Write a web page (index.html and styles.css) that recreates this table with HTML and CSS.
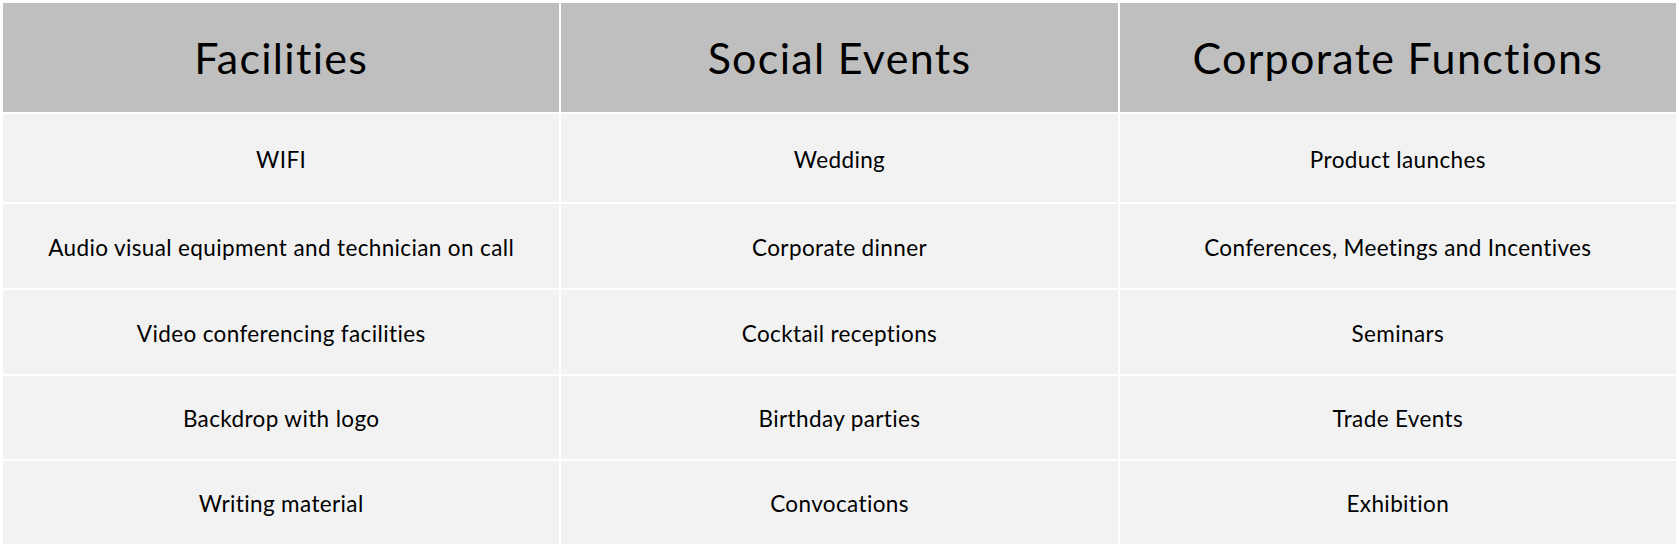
FILE: index.html
```html
<!DOCTYPE html>
<html lang="en">
<head>
<meta charset="utf-8">
<title>Facilities and Events</title>
<link rel="stylesheet" href="styles.css">
</head>
<body>
<table class="grid">
  <thead>
    <tr class="head-row">
      <th>Facilities</th>
      <th>Social Events</th>
      <th>Corporate Functions</th>
    </tr>
  </thead>
  <tbody>
    <tr class="row row-1">
      <td>WIFI</td>
      <td>Wedding</td>
      <td>Product launches</td>
    </tr>
    <tr class="row row-2">
      <td>Audio visual equipment and technician on call</td>
      <td>Corporate dinner</td>
      <td>Conferences, Meetings and Incentives</td>
    </tr>
    <tr class="row row-3">
      <td>Video conferencing facilities</td>
      <td>Cocktail receptions</td>
      <td>Seminars</td>
    </tr>
    <tr class="row row-4">
      <td>Backdrop with logo</td>
      <td>Birthday parties</td>
      <td>Trade Events</td>
    </tr>
    <tr class="row row-5">
      <td>Writing material</td>
      <td>Convocations</td>
      <td>Exhibition</td>
    </tr>
  </tbody>
</table>
</body>
</html>
```

FILE: styles.css
```css
html, body {
  margin: 0;
  padding: 0;
  background: #ffffff;
}

body {
  padding: 1px;
  font-family: Lato, "Open Sans", "Liberation Sans", sans-serif;
  color: #000000;
}

.grid {
  width: 100%;
  table-layout: fixed;
  border-collapse: separate;
  border-spacing: 2px;
}

.grid th,
.grid td {
  padding: 0;
  text-align: center;
  vertical-align: middle;
}

.grid th {
  background: #bfbfbf;
  height: 109px;
  font-size: 43px;
  font-weight: 400;
  letter-spacing: 1.3px;
}

.grid td {
  background: #f2f2f2;
  font-size: 22.5px;
  letter-spacing: 0.37px;
  padding-top: 2px;
}

.row-1 td { height: 86px; }
.row-2 td { height: 82px; }
.row-3 td { height: 82px; }
.row-4 td { height: 81px; }
.row-5 td { height: 81px; }
```
